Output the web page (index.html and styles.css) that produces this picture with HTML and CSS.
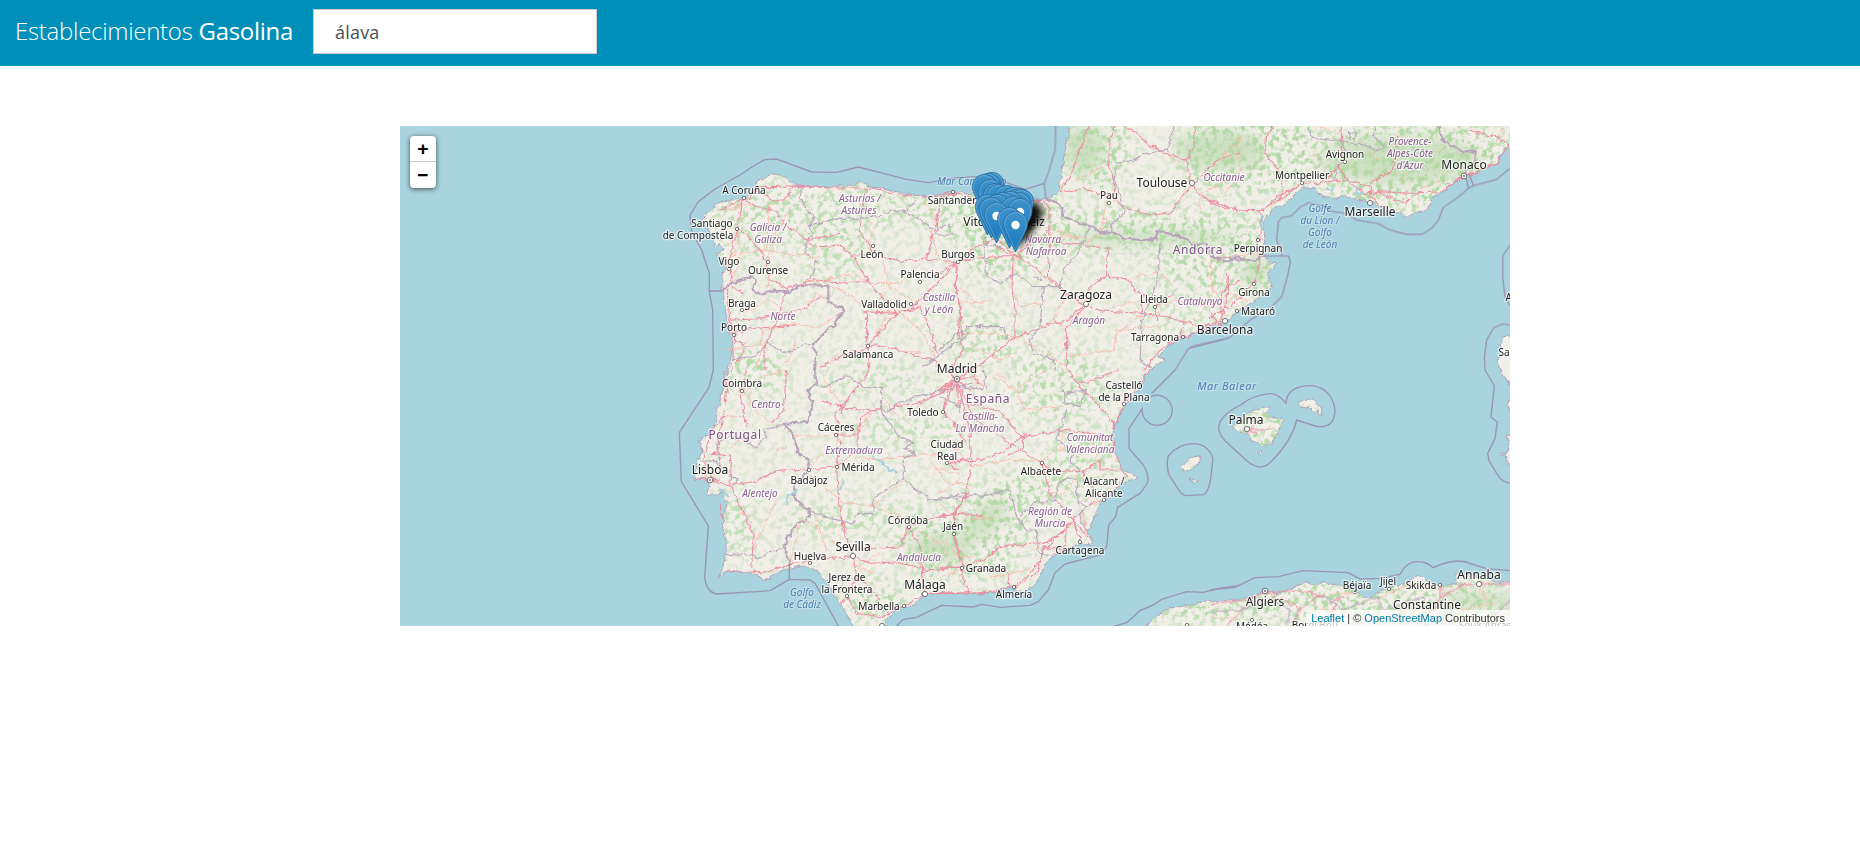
FILE: index.html
```html
<!DOCTYPE html>
<html lang="es">
<head>
<meta charset="utf-8">
<title>Establecimientos Gasolina</title>
<link rel="stylesheet" href="styles.css">
</head>
<body>
<header class="topbar">
  <h1 class="brand">Establecimientos <strong>Gasolina</strong></h1>
  <input class="search" type="text" value="álava" aria-label="Provincia">
</header>
<main class="content">
<div class="map">
<svg class="tiles" viewBox="400 126 1110 500" width="1110" height="500">
<defs>
  <filter id="rough" filterUnits="userSpaceOnUse" x="380" y="106" width="1150" height="540"><feTurbulence type="fractalNoise" baseFrequency=".15" numOctaves="3" seed="4" result="n"/><feDisplacementMap in="SourceGraphic" in2="n" scale="6" xChannelSelector="R" yChannelSelector="G"/></filter>
  <filter id="wood" filterUnits="userSpaceOnUse" x="400" y="126" width="1110" height="500" color-interpolation-filters="sRGB">
    <feTurbulence type="fractalNoise" baseFrequency=".17" numOctaves="5" seed="9"/>
    <feColorMatrix values="0 0 0 0 .7  0 0 0 0 .85  0 0 0 0 .65  5 0 0 0 -2.35" result="n"/>
    <feGaussianBlur in="SourceGraphic" stdDeviation="9" result="b"/>
    <feComposite in="n" in2="b" operator="in"/>
  </filter>
  <filter id="soft" x="-.5" y="-.5" width="2" height="2"><feGaussianBlur stdDeviation="3.5"/></filter>
  <filter id="haze" x="-.5" y="-.5" width="2" height="2"><feGaussianBlur stdDeviation="7"/></filter>
  <path id="iberia" d="M1069 118L1069 126 1067 140 1063 163 1059 190 1053 196 1043 200 1037 200 1020 198 990 196 975 190 970 195 960 191 952 196 947 193 940 196 923 197 907 194 887 189 870 187 861 181 855 185 840 186 817 187 796 186 790 180 782 175 776 173 768 176 760 179 753 188 745 199 733 200 722 202 712 208 705 215 703 223 712 233 715 247 720 242 723 252 716 253 725 260 727 267 722 275 722 290 725 307 727 320 732 337 732 353 728 370 726 377 721 397 715 423 708 435 699 441 702 450 698 460 694 478 708 480 710 487 707 496 722 493 727 503 723 523 726 537 726 555 722 570 718 577 727 571 747 572 767 580 783 570 800 566 817 570 827 582 833 593 842 607 850 620 855 630 885 630 885 622 888 616 903 607 915 605 923 595 940 593 968 594 995 592 1010 588 1023 592 1032 587 1040 577 1042 567 1053 557 1068 548 1080 544 1093 543 1088 533 1093 520 1098 507 1105 498 1118 487 1137 477 1123 470 1115 453 1112 437 1115 423 1123 408 1137 390 1150 370 1165 359 1158 357 1170 345 1187 335 1207 327 1227 321 1237 312 1260 298 1272 287 1268 272 1278 263 1268 262 1265 253 1264 220 1272 210 1287 202 1303 188 1317 187 1315 192 1337 199 1348 195 1357 199 1370 201 1380 208 1400 212 1405 217 1428 209 1432 198 1442 192 1450 185 1463 177 1483 170 1497 162 1503 152 1518 142V118H1069z"/>
  <path id="africa" d="M1140 634L1153 618 1170 608 1193 605 1207 602 1240 600 1265 592 1280 593 1303 583 1343 585 1355 592 1370 598 1387 588 1407 583 1418 574 1430 583 1440 587 1457 583 1455 574 1480 576 1500 583 1518 583V634H1140z"/>
  <g id="isles">
    <path d="M1232 428L1243 417 1255 410 1271 407 1266 413 1275 418 1283 419 1280 430 1270 445 1263 446 1250 440 1249 433 1240 432z M1299 402L1312 399 1321 407 1322 415 1309 408 1299 407z M1181 467L1190 457 1201 456 1199 463 1190 471 1182 470z M1190 479L1198 481 1193 484z M1258 453L1262 451 1261 455z"/>
    <path d="M1518 335L1503 338 1500 345 1503 350 1497 360 1500 370 1508 382 1518 385z M1518 400L1508 402 1510 410 1518 412z M1518 432L1507 436 1510 444 1505 456 1508 465 1518 465z M1501 453H1504V456H1501z"/>
  </g>
  <clipPath id="land"><use href="#iberia"/><use href="#africa"/><path d="M1232 428L1243 417 1255 410 1271 407 1266 413 1275 418 1283 419 1280 430 1270 445 1263 446 1250 440 1249 433 1240 432z M1299 402L1312 399 1321 407 1322 415 1309 408 1299 407z M1181 467L1190 457 1201 456 1199 463 1190 471 1182 470z"/></clipPath>
  <linearGradient id="pinFill" x1="0" y1="0" x2="0" y2="1"><stop offset="0" stop-color="#4093cb"/><stop offset="1" stop-color="#1479be"/></linearGradient>
  <g id="pin"><path d="M.5 -28.500C.5 -35.400 5.800 -40.500 12.500 -40.500S24.500 -35.400 24.500 -28.500C24.500 -25 23.500 -22.500 22 -19.500L12.500 0 3 -19.500C1.500 -22.500 .5 -25 .5 -28.500z" fill="url(#pinFill)" stroke="#2a70a5" stroke-width=".9"/><path d="M1.600 -28.500C1.600 -34.500 6.500 -39.400 12.500 -39.400S23.400 -34.500 23.400 -28.500C23.400 -25 22.500 -23 21 -20L12.500 -2.500 4 -20C2.500 -23 1.600 -25 1.600 -28.500z" fill="none" stroke="#fff" stroke-opacity=".2"/><circle cx="12.500" cy="-27" r="4.200" fill="#fff"/></g>
</defs>

<rect x="400" y="126" width="1110" height="500" class="sea"/>
<g filter="url(#rough)" class="ground"><use href="#iberia"/><use href="#africa"/><use href="#isles"/></g>

<g clip-path="url(#land)">
<g class="forest" filter="url(#haze)"><ellipse cx="940" cy="548" rx="32" ry="14"/><ellipse cx="985" cy="520" rx="28" ry="12" transform="rotate(-40 985 520)"/><ellipse cx="1085" cy="150" rx="20" ry="26"/><ellipse cx="1220" cy="150" rx="45" ry="20"/><ellipse cx="1400" cy="160" rx="80" ry="24"/><ellipse cx="1255" cy="272" rx="12" ry="16"/><ellipse cx="1150" cy="238" rx="90" ry="7"/><ellipse cx="1480" cy="600" rx="40" ry="8"/></g>
<g filter="url(#wood)" fill="#000">
  <rect x="400" y="126" width="1110" height="500" opacity=".3"/>
  <ellipse cx="830" cy="205" rx="150" ry="25" opacity=".65"/><ellipse cx="750" cy="225" rx="45" ry="45" opacity=".5"/><ellipse cx="835" cy="245" rx="35" ry="35" opacity=".7"/>
  <ellipse cx="1110" cy="230" rx="170" ry="22"/><ellipse cx="1100" cy="145" rx="30" ry="45"/><ellipse cx="1250" cy="150" rx="75" ry="45"/><ellipse cx="1420" cy="165" rx="110" ry="50"/><ellipse cx="1240" cy="260" rx="70" ry="35"/><ellipse cx="1180" cy="300" rx="30" ry="60" opacity=".5"/>
  <ellipse cx="1000" cy="255" rx="40" ry="22"/><ellipse cx="1000" cy="210" rx="60" ry="20"/><ellipse cx="985" cy="340" rx="40" ry="25" opacity=".8"/><ellipse cx="1060" cy="385" rx="50" ry="35" opacity=".8"/><ellipse cx="755" cy="370" rx="28" ry="22"/><ellipse cx="735" cy="525" rx="20" ry="35" opacity=".7"/>
  <ellipse cx="880" cy="380" rx="60" ry="15" opacity=".6"/><ellipse cx="905" cy="430" rx="70" ry="16" opacity=".6"/><ellipse cx="960" cy="545" rx="65" ry="35"/><ellipse cx="995" cy="515" rx="35" ry="30"/><ellipse cx="1025" cy="490" rx="50" ry="15"/><ellipse cx="860" cy="520" rx="80" ry="14" opacity=".8"/><ellipse cx="870" cy="600" rx="35" ry="20"/><ellipse cx="1085" cy="460" rx="35" ry="35" opacity=".7"/>
  <ellipse cx="1320" cy="600" rx="170" ry="25"/><ellipse cx="1460" cy="600" rx="50" ry="25"/><ellipse cx="1190" cy="612" rx="50" ry="12"/><ellipse cx="1260" cy="425" rx="40" ry="30"/>
</g>
</g>

<g filter="url(#rough)" class="lines">
<!-- northwest -->
<g transform="translate(640 120) scale(.33333)">
  <g class="minor"><path d="M285 470L300 400 380 390 470 405 540 410M385 250L380 390M395 440L380 500M540 395L500 365M690 490L640 460 560 480M690 490L780 490 850 420M850 240L890 300M730 420L745 500 820 545M460 250L430 300 395 350 385 420M250 270L340 250M255 690L360 675 370 630 470 610 530 625 600 580M310 580L380 540 420 560M375 660L350 740M440 730L470 660M560 540L530 520 500 560M780 580L850 640 880 700 890 740M685 670L780 690 850 700M690 300L690 400M870 330L900 420 950 440M540 740L600 700 690 685M250 440L300 380 290 330M740 590L700 660M500 480L600 510 680 560 770 580"/></g>
  <g class="road"><path d="M275 750L285 645 270 600 262 520 278 470 265 440 275 390 290 325 310 240 330 250 365 265 405 270 430 310 465 335 530 380 570 378 600 375 635 405 685 485 770 580 820 560 950 430M320 240L360 200 468 198 560 203 680 205 780 222 860 232 900 228 960 220M465 200L430 240 400 245 370 222M680 205L665 280 660 330 680 365 695 400M635 405L700 405 780 422 860 418 950 425 990 400M290 325L320 345 370 400 390 480 440 505 520 480 620 487 685 485M440 505L410 600 375 680 375 750M270 600L350 597 500 565 540 530M270 640L350 625 470 615M275 500L310 520M680 575L680 680 690 750M685 675L770 580M685 675L760 685 850 715 890 720M670 575L770 580M770 580L840 560 860 600 870 630 890 700M950 430L945 500 960 560 955 640 970 690 930 750M890 340L900 240M860 415L880 340 900 250M235 270L310 240M600 340L500 360M540 745L600 712 685 685M285 660L320 680 290 730"/></g>
  <path class="region" d="M490 200L480 230 500 270 525 290 505 320 520 340 500 365 495 400 530 420 520 460 500 480M500 320L590 295 650 295 720 290 760 270 800 275 830 240M770 270L830 290 880 330 890 345 935 345 930 310 900 320M275 720L350 705 380 670 440 700 510 670M850 740L930 680 990 640"/>
  <path class="nation" d="M247 512L280 485 335 470 350 480 338 510 350 522 420 512 445 520 480 495 565 497 565 545 610 565 580 620 550 640 530 665 515 670 528 700 525 750"/>
</g>
<!-- northeast -->
<g transform="translate(940 120) scale(.33333)">
  <g class="minor"><path d="M320 320L440 370 490 330 500 290M230 410L210 500 240 560 310 550M250 660L380 740M390 710L520 690 530 640 610 580M520 630L650 620M230 650L160 640 60 640M410 180L490 140M300 290L330 350 430 350M380 520L340 600 380 630M500 250L480 330M780 270L780 220 850 190M810 430L820 520M700 500L650 440M550 480L650 460M50 550L150 545M100 680L180 720 220 700M60 500L100 540M600 540L520 560M620 600L700 540 800 560M650 640L700 650M850 100L900 60M640 80L720 130"/></g>
  <g class="road"><path d="M360 218L430 205 520 235 560 265 630 285 690 280 755 195 738 120 675 100 630 75 590 40 550 18M738 120L765 75 762 18M527 18L507 70 507 130 525 200 520 240M360 212L390 170 415 100 445 18M755 195L780 225 840 260 900 270M755 190L850 110 900 100M0 460L55 425 110 380 165 355 220 400 280 440 350 500 435 555 480 572 600 580 680 590 730 605 790 620 850 600M165 355L150 300 90 230 40 215 0 220M165 375L220 410 210 410M230 400L330 330 330 270 310 240 200 260M330 320L325 470 370 510M435 555L380 600 310 620 225 650 120 735 100 750M220 400L215 500 225 570 225 660M500 465L500 420 505 385 330 365M435 550L450 500 500 465 560 480 610 530M55 425L45 500 60 560 65 650M440 555L380 620 380 750M820 565L860 500 900 480M850 600L840 550 810 555M730 605L720 650 650 700 615 750M800 625L720 655M870 460L865 510M605 580L605 540M60 420L165 410 240 410M650 600L650 560 700 520"/></g>
  <path class="region" d="M700 18L685 90 620 100 580 120 530 130 525 190 545 240 550 280 515 310 515 335M130 380L140 470 180 490 230 460 280 500 360 500 375 440 420 390 450 315M660 370L655 450 640 520 605 600 605 640 600 720 640 750M310 500L300 620 270 660 280 700 340 720 345 750M0 690L80 620 190 620 200 660M150 300L130 370 180 380M280 470L310 480"/>
  <path class="nation" d="M318 238L360 250 370 290 420 310 450 315 485 340 515 335 550 355 600 360 648 358 652 333 710 345 745 360 755 375 800 372 830 415 860 410 900 425"/>
</g>
<g transform="translate(1210 120) scale(.33333)">
  <g class="minor"><path d="M0 150L30 120 100 45M40 230L90 150 80 80M310 90L330 140 280 180M580 90L560 40M450 60L500 120M570 180L600 150M700 180L620 210M390 40L330 20M0 420L60 410 140 400M0 560L60 520 110 540M880 20L850 80M590 300L600 285M0 500L50 560"/></g>
  <g class="road"><path d="M0 240L80 270 150 272 215 235 275 190 330 190 385 140 400 110 390 60 395 18M150 272L155 330 145 400 150 430 130 490 60 560 0 590M160 272L200 230 270 195M215 235L220 170 165 100 170 50 190 18M330 190L380 180 450 188 480 200 485 230 510 260M385 140L420 190 470 225M480 190L550 150 560 50M450 225L510 215 600 220 690 215 740 180 860 130 895 80 880 60 780 30M500 215L580 250 600 235M30 620L0 580M30 620L55 520 50 460"/></g>
  <path class="region" d="M295 18L310 55 360 60 395 65 410 110 380 140 370 190M395 65L460 75 500 90 525 80 490 50 495 18M420 60L415 38 440 42 430 60"/>
  <path class="nation" d="M0 405L20 415 50 425 80 412 130 425 165 405M685 18L695 55 720 75 750 92 800 97 795 130 765 160"/>
  <path class="water" d="M435 200L445 225 460 215M155 285L158 330M345 205L370 210" />
</g>
<!-- southwest -->
<g transform="translate(640 370) scale(.33333)">
  <g class="minor"><path d="M310 60L350 130 400 160M250 140L310 140M275 235L310 190M440 230L410 240M440 0L370 20 300 80M460 195L560 200M505 300L540 260 590 240M650 260L710 270 780 260 900 250M650 190L700 120M510 320L560 360 610 395 700 410 790 330M530 440L545 500 560 540M300 430L350 440M410 390L380 450 340 540M830 480L900 520 920 560M590 460L620 490M450 590L480 450 520 465 600 530M710 410L780 440 800 470M860 90L780 150 730 80M880 280L920 340 980 340M960 310L900 300M210 270L190 330M300 200L350 230M700 610L650 590 720 550M550 30L600 100"/></g>
  <g class="road"><path d="M320 0L300 60 320 170M260 60L250 140 210 190 190 270 215 330 270 345 275 260 215 250M250 150L235 210 240 290 210 320M280 345L340 335 420 300 505 298 590 290 600 240 590 130 690 0M545 93L620 115 730 120 860 90 940 50M590 195L655 195 660 150 690 120 725 120M590 290L595 380 610 480 640 555M270 345L295 400 340 490 335 595M262 600L360 608 430 590 500 570 640 560 645 555M640 540L780 530 805 470 840 450 940 430 990 360M805 470L840 530 845 610 855 670M640 560L690 580 780 575 860 600 970 590M640 560L650 620 620 680 600 700M620 680L650 730 720 740 790 710 855 672 990 668M845 610L870 600M910 120L980 220M940 30L880 70 860 90M950 30L910 120M950 30L990 0M950 30L920 0M950 30L990 60M905 125L940 30M920 280L990 265M920 280L960 300M440 0L430 120 400 160M590 290L650 240 655 195M240 400L250 460M160 325L240 330M620 480L600 440M940 490L970 590M250 0L265 70M600 130L640 60M720 690L680 640 650 630"/></g>
  <path class="region" d="M230 220L270 200 320 210 345 235 380 200 370 180 430 165M170 270L230 275 235 225M220 270L270 320 295 320 290 345M260 550L330 555 360 565 400 540 435 535M530 45L560 50 620 15 680 55 725 55 725 130 780 200 820 215 790 240 830 250 790 260 790 325 720 370 700 390 700 430 650 430 640 460 570 445 500 420M790 330L870 390 990 380M730 130L780 100 830 80 990 40"/>
  <path class="nation" d="M525 0L530 40 502 60 518 100 505 155 430 162 462 195 465 225 480 255 508 270 500 310 465 340 460 375 490 415 510 415 500 450 470 460 440 510 432 528 445 565 448 590"/>
  <path class="water" d="M445 410L440 380 470 360M700 260L740 290 770 310M240 360L265 380M600 360L610 330"/>
</g>
<!-- southeast -->
<g transform="translate(940 370) scale(.33333)">
  <g class="minor"><path d="M20 200L90 290 200 270 310 275M310 275L340 240 430 230M160 20L230 60 250 120 370 110M60 330L0 370M0 500L50 550 100 560M150 620L270 600M280 540L340 500M350 380L390 350 410 310M320 0L250 40 230 60M460 380L420 400M90 0L140 60M430 430L440 500M170 440L90 450M480 290L450 200M370 180L360 240M40 440L0 400M300 360L350 370M10 620L60 600M200 30L170 10"/></g>
  <g class="road"><path d="M385 0L410 40 460 90 520 155 520 180M50 30L100 140 180 200 305 278 330 300 430 305 480 380M305 278L330 370 400 450 420 515M95 275L75 380 45 430 40 490 65 590 70 620 85 670M95 275L90 180 50 30M260 190L180 250 95 275 20 280M65 100L180 120 240 200 390 180 500 200M50 30L100 20 130 50M630 0L550 100 520 180 520 250 560 320 490 395 450 400 400 450 310 540 290 610 220 655M0 592L65 592 130 570 180 530 310 520 380 480M0 668L85 670 170 665 210 650 200 600 90 600M400 450L440 500 460 515M410 40L460 30 530 0M430 305L480 270 480 300 530 300M0 270L50 270 95 275M50 30L0 70M50 30L60 130M50 30L0 60M50 30L20 0M220 650L260 620 300 570M380 490L370 540 310 530M250 190V235L200 260M0 440L60 430 130 440"/></g>
  <path class="region" d="M210 360L230 440 260 480 290 480 290 540 310 555 350 555M0 385L80 370 120 380 210 360M240 440L280 400 350 390 355 340 390 320 410 330 415 400 440 410 420 440 450 500M370 60L375 100 420 110 440 60 380 70M380 120L350 210 400 240 390 270 430 310 430 340M0 80L60 110 70 50 140 60 130 0"/>
</g>
<g transform="translate(1210 370) scale(.33333)">
  <g class="road"><path d="M100 178H182M110 178L145 195M0 705L110 690 160 668 210 685 270 715 340 670M160 670L200 665 260 660 330 675M270 715L250 768M690 645L690 690 650 740M740 650L800 640 900 645M380 700L340 768M690 680L770 640M50 768L100 710M400 680L360 700"/></g>
  <g class="minor"><path d="M120 172L170 130M480 700L580 650 690 645M370 670L430 670M700 690L760 720 850 700M300 680L330 720 440 740M540 740L600 720 700 740M0 740L80 745M690 640L700 670M800 640L830 690"/></g>
  <path class="region" d="M0 725L80 720 190 690 240 720 230 768M330 670L400 720 500 680 520 720 640 680 650 768M850 740L900 690M420 740L450 768"/>
</g>
</g>

<!-- territorial waters -->
<g class="maritime">
<g transform="translate(640 120) scale(.33333)"><path d="M220 750L218 570 208 515 208 460 185 390 155 335 150 285 175 245 225 207 300 165 345 135 375 119 410 117 455 134 515 156 590 157 655 141 730 160 800 178 865 188 950 173 1010 170 1060 176M208 513H245"/></g>
<g transform="translate(940 120) scale(.33333)"><path d="M190 184L255 208 313 190 326 155 345 90 347 18M313 190L318 238M635 820L705 750 745 686 850 658"/></g>
<g transform="translate(1210 120) scale(.33333)"><path d="M40 658L60 652 120 600 180 565 215 530 232 470 241 425 235 408H165M217 405L200 360 205 305 215 293 245 287 270 262 295 248 340 258 370 275 410 280 440 300 505 311 540 330 590 343 635 343 665 325 685 300 700 262 740 235 775 205 768 172M775 205L790 197 860 178 900 145M790 197L778 165M900 375L878 408V470L885 530 900 558M900 615L875 612 850 625 830 660 823 710 825 750M-60 680L0 667 40 658"/></g>
<g transform="translate(640 370) scale(.33333)"><path d="M220 0L207 52 118 188 124 335 205 468 194 620Q197 665 230 672L350 665 390 662 448 628 510 630 525 640 595 768M448 628V580M770 768L790 748 830 742 905 706 1000 711 1025 703 1080 712 1170 706 1195 695 1225 660 1245 608 1275 582 1340 565 1380 555 1400 530 1406 465 1427 440 1433 412 1500 370 1522 340Q1530 320 1510 285L1467 235V176L1507 115A45 45 0 1 0 1533 80"/></g>
<g transform="translate(940 370) scale(.33333)"><path d="M765 221Q805 225 819 265L812 325Q805 370 790 374L740 377Q725 375 715 358L686 312Q678 280 685 258Q715 220 765 221zM525 768L560 758 600 722 640 705 665 688 740 665 790 667 835 655 900 646"/></g>
<g transform="translate(1210 370) scale(.33333)"><path d="M228 101Q205 70 180 71Q130 75 95 103Q30 135 26 170Q25 190 45 212L110 272Q150 305 178 280Q245 215 260 150L315 168Q370 180 375 125Q370 60 310 47Q230 45 228 101M0 660L75 652 135 623 205 620 280 602 415 608 450 627 510 625 570 613Q590 573 625 575Q650 575 670 593Q740 560 785 582L830 596 900 602M825 0L853 48 843 140 862 157 855 205 833 250 838 275 870 325Q885 340 900 338"/></g>
</g>

<g class="dots">
<circle cx="744" cy="198" r="1.700"/><circle cx="737" cy="229" r="1.700"/><circle cx="729" cy="269" r="1.700"/><circle cx="768" cy="262" r="1.700"/><circle cx="742" cy="310" r="1.700"/><circle cx="734" cy="335" r="1.700"/><circle cx="873" cy="246" r="1.700"/><circle cx="920" cy="282" r="1.700"/><circle cx="911" cy="304" r="1.700"/><circle cx="868" cy="346" r="1.700"/><circle cx="953" cy="192" r="1.700"/><circle cx="958" cy="262" r="1.700"/><circle cx="1109" cy="203" r="1.700"/><circle cx="1192" cy="183" r="2.600"/><circle cx="1086" cy="304" r="2.600"/><circle cx="1155" cy="307" r="1.700"/><circle cx="1183" cy="337" r="1.700"/><circle cx="1225" cy="321" r="2.600"/><circle cx="1302" cy="183" r="1.700"/><circle cx="1345" cy="162" r="1.700"/><circle cx="1370" cy="203" r="2.600"/><circle cx="1258" cy="240" r="1.700"/><circle cx="1254" cy="284" r="1.700"/><circle cx="1237" cy="311" r="1.700"/><circle cx="742" cy="391" r="1.700"/><circle cx="836" cy="435" r="1.700"/><circle cx="809" cy="470" r="1.700"/><circle cx="837" cy="467" r="1.700"/><circle cx="947" cy="463" r="1.700"/><circle cx="943" cy="412" r="1.700"/><circle cx="909" cy="527" r="1.700"/><circle cx="954" cy="534" r="1.700"/><circle cx="853" cy="556" r="2.600"/><circle cx="810" cy="563" r="1.700"/><circle cx="847" cy="596" r="1.700"/><circle cx="925" cy="594" r="2.600"/><circle cx="904" cy="606" r="1.700"/><circle cx="962" cy="568" r="1.700"/><circle cx="1014" cy="587" r="1.700"/><circle cx="1042" cy="463" r="1.700"/><circle cx="1104" cy="500" r="1.700"/><circle cx="1080" cy="542" r="1.700"/><circle cx="1124" cy="404" r="1.700"/><circle cx="1247" cy="429" r="2.600"/><circle cx="1355" cy="592" r="1.700"/><circle cx="1389" cy="589" r="1.700"/><circle cx="1440" cy="585" r="1.700"/><circle cx="1479" cy="584" r="2.600"/><circle cx="1252" cy="620" r="1.700"/><circle cx="1187" cy="625" r="1.700"/><circle cx="882" cy="626" r="2.600"/>
<circle cx="957" cy="379" r="2.800"/><circle cx="957" cy="379" r=".7"/><circle cx="710" cy="480" r="2.800"/><circle cx="710" cy="480" r=".7"/><circle cx="1464" cy="176" r="2.800"/><circle cx="1464" cy="176" r=".7"/><circle cx="1265" cy="591" r="2.800"/><circle cx="1265" cy="591" r=".7"/>
</g>

<g class="city">
<text x="744" y="194">A Coruña</text><text x="712" y="227">Santiago</text><text x="698" y="239">de Compostela</text><text x="729" y="265">Vigo</text><text x="768" y="274">Ourense</text><text x="742" y="307">Braga</text><text x="734" y="331">Porto</text><text x="872" y="258">León</text><text x="920" y="278">Palencia</text><text x="884" y="308">Valladolid</text><text x="868" y="358">Salamanca</text><text x="952" y="204">Santander</text><text x="958" y="258">Burgos</text><text x="1109" y="199">Pau</text><text x="1154" y="303">Lleida</text><text x="1155" y="341">Tarragona</text><text x="1302" y="179">Montpellier</text><text x="1345" y="158">Avignon</text><text x="1258" y="252">Perpignan</text><text x="1254" y="296">Girona</text><text x="1258" y="315">Mataró</text><text x="742" y="387">Coimbra</text><text x="836" y="431">Cáceres</text><text x="858" y="471">Mérida</text><text x="809" y="484">Badajoz</text><text x="947" y="448">Ciudad</text><text x="947" y="460">Real</text><text x="923" y="416">Toledo</text><text x="908" y="524">Córdoba</text><text x="953" y="530">Jaén</text><text x="810" y="560">Huelva</text><text x="847" y="581">Jerez de</text><text x="847" y="593">la Frontera</text><text x="879" y="610">Marbella</text><text x="1124" y="389">Castelló</text><text x="1124" y="401">de la Plana</text><text x="1041" y="475">Albacete</text><text x="1104" y="485">Alacant /</text><text x="1104" y="497">Alicante</text><text x="1080" y="554">Cartagena</text><text x="986" y="572">Granada</text><text x="1014" y="598">Almería</text><text x="1357" y="589">Béjaïa</text><text x="1388" y="585">Jijel</text><text x="1421" y="589">Skikda</text><text x="1252" y="630">Médéa</text><text x="1315" y="629">Bordj Bou</text><text x="1485" y="629">Souk Ahras</text><text x="1522" y="301">Ajaccio</text><text x="1515" y="356">Sassari</text>
</g>
<g class="city big">
<text x="1004" y="226">Vitoria-Gasteiz</text><text x="1162" y="187">Toulouse</text><text x="1086" y="299">Zaragoza</text><text x="1225" y="334">Barcelona</text><text x="957" y="373">Madrid</text><text x="1464" y="169">Monaco</text><text x="1370" y="216">Marseille</text><text x="1246" y="424">Palma</text><text x="710" y="474">Lisboa</text><text x="853" y="551">Sevilla</text><text x="925" y="589">Málaga</text><text x="1265" y="606">Algiers</text><text x="1479" y="579">Annaba</text><text x="1427" y="609">Constantine</text>
</g>
<g class="state">
<text x="768" y="231">Galicia /</text><text x="768" y="243">Galiza</text><text x="860" y="202">Asturias /</text><text x="859" y="214">Asturies</text><text x="939" y="301">Castilla</text><text x="939" y="313">y León</text><text x="783" y="320">Norte</text><text x="1043" y="243">Navarra</text><text x="1046" y="255">Nafarroa</text><text x="1224" y="181">Occitanie</text><text x="1200" y="305">Catalunya</text><text x="1089" y="324">Aragón</text><text x="1410" y="145">Provence-</text><text x="1410" y="157">Alpes-Côte</text><text x="1410" y="169">d'Azur</text><text x="766" y="408">Centro</text><text x="760" y="497">Alentejo</text><text x="854" y="454">Extremadura</text><text x="919" y="561">Andalucía</text><text x="980" y="420">Castilla-</text><text x="980" y="432">La Mancha</text><text x="1090" y="441">Comunitat</text><text x="1090" y="453">Valenciana</text><text x="1050" y="515">Región de</text><text x="1050" y="527">Murcia</text>
</g>
<g class="country"><text x="1198" y="254">Andorra</text><text x="735" y="439">Portugal</text><text x="988" y="403">España</text></g>
<g class="seaname"><text x="972" y="185">Mar Cantábrico</text><text x="1320" y="212">Golfe</text><text x="1320" y="224">du Lion /</text><text x="1320" y="236">Golfo</text><text x="1320" y="248">de León</text><text x="802" y="596">Golfo</text><text x="802" y="608">de Cádiz</text><text x="1227" y="390" class="wide">Mar Balear</text></g>

<!-- station pins: shared shadow, then pins from north to south -->
<path class="shade" filter="url(#soft)" d="M1016 250L1022 200 1036 203 1043 209 1041 219 1030 234z"/>
<g>
<use href="#pin" x="979.500" y="213"/><use href="#pin" x="976" y="214"/><use href="#pin" x="972" y="215"/><use href="#pin" x="978" y="220"/><use href="#pin" x="983" y="224"/><use href="#pin" x="986" y="225"/><use href="#pin" x="994" y="226"/><use href="#pin" x="1001" y="228"/><use href="#pin" x="1007" y="229"/><use href="#pin" x="1009" y="230"/><use href="#pin" x="1006" y="233"/><use href="#pin" x="998" y="232"/><use href="#pin" x="990" y="233"/><use href="#pin" x="981" y="236"/><use href="#pin" x="975" y="235"/><use href="#pin" x="985" y="235"/><use href="#pin" x="979" y="238"/><use href="#pin" x="1001" y="237"/><use href="#pin" x="1007.500" y="239"/><use href="#pin" x="984" y="243"/><use href="#pin" x="997" y="248"/><use href="#pin" x="1003" y="252"/>
</g>
</svg>
<div class="zoom"><a class="zoom-btn">+</a><a class="zoom-btn">−</a></div>
<div class="credit"><a>Leaflet</a> | © <a>OpenStreetMap</a> Contributors</div>
</div>
</main>
</body>
</html>
```
FILE: styles.css
```css
* { box-sizing: border-box; }
body { margin: 0; background: #fff; font-family: "Open Sans", "Noto Sans", sans-serif; }
.topbar { display: flex; align-items: flex-start; height: 66px; padding: 9px 15px 0; background: #008fb8; }
.brand { width: 298px; margin: 0; font-size: 24px; font-weight: 300; line-height: 43px; letter-spacing: -.29px; color: #fff; white-space: nowrap; }
.brand strong { font-weight: 400; }
.search { width: 284px; height: 45px; padding: 0 21px; border: 1px solid #ccc; border-radius: 0; background: #fff; color: #495057; font: 18px "Open Sans", sans-serif; letter-spacing: .2px; }
.content { display: flex; justify-content: center; padding: 60px 0 0 50px; }
.map { position: relative; width: 1110px; height: 500px; overflow: hidden; background: #a9d3de; }
.tiles { display: block; }
.sea { fill: #a9d3de; }
.ground { fill: #f2efe9; stroke: #a796b5; stroke-width: .8; }
.forest { fill: #b5d6a8; opacity: .6; }
.lines { fill: none; stroke-linejoin: round; }
.road { stroke: #ee8ba0; stroke-width: 3.2; }
.minor { stroke: #f9b9a8; stroke-width: 2.6; }
.region { stroke: #b9a9bd; stroke-width: 3.4; }
.nation { stroke: #b7a3ba; stroke-width: 6.5; }
.water { stroke: #a9d3de; stroke-width: 7; }
.maritime { fill: none; stroke: #9b95b3; stroke-width: 4.2; stroke-linejoin: round; }
.dots { fill: #fff; stroke: #555; stroke-width: .8; }
.tiles text { font-family: "Noto Sans", sans-serif; text-anchor: middle; paint-order: stroke; stroke: rgba(255, 255, 255, .65); stroke-width: 2.5px; stroke-linejoin: round; }
.city { font-size: 10px; fill: #222; }
.big { font-size: 12px; }
.state { font-size: 10px; font-style: italic; fill: #8a6090; }
.country { font-size: 12px; letter-spacing: .6px; fill: #7b5080; }
.seaname { font-size: 10px; font-style: italic; fill: #4d80b3; }
.tiles .seaname text { stroke-opacity: .4; }
.seaname .wide { font-size: 11px; letter-spacing: .5px; }
.shade { fill: #000; opacity: .95; }
.zoom { position: absolute; left: 10px; top: 10px; width: 26px; border-radius: 4px; background: #fff; box-shadow: 0 1px 5px rgba(0, 0, 0, .65); }
.zoom-btn { display: block; height: 26px; font: bold 18px/26px "DejaVu Sans Mono", monospace; text-align: center; color: #000; }
.zoom-btn:first-child { border-bottom: 1px solid #ccc; }
.credit { position: absolute; right: 0; bottom: 0; padding: 0 5px; background: rgba(255, 255, 255, .7); color: #333; font: 11px/16px "Liberation Sans", Arial, sans-serif; }
.credit a { color: #0078a8; }
```
